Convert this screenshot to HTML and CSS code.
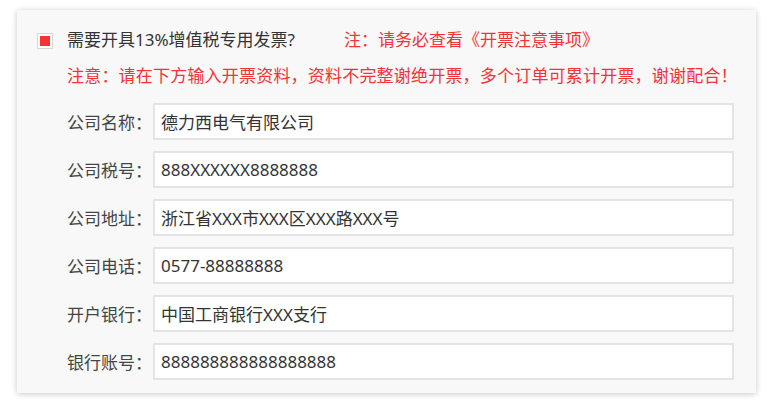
FILE: index.html
```html
<!DOCTYPE html>
<html lang="zh">
  <head>
    <meta charset="UTF-8" />
    <title>增值税专用发票</title>
    <meta name="viewport" content="width=device-width, initial-scale=1.0" />
    <link rel="stylesheet" href="styles.css">
  </head>
  <body>
    <div class="invoice-box">
      <div class="invoice-head">
        <span class="check-box"><span class="check-mark"></span></span>
        <span class="question">需要开具13%增值税专用发票?</span>
        <span class="red-text">注：请务必查看《开票注意事项》</span>
      </div>
      <p class="notice red-text">注意：请在下方输入开票资料，资料不完整谢绝开票，多个订单可累计开票，谢谢配合！</p>

      <form class="invoice-form">
        <div class="form-row">
          <label>公司名称：</label>
          <input type="text" value="德力西电气有限公司" />
        </div>
        <div class="form-row">
          <label>公司税号：</label>
          <input type="text" value="888XXXXXX8888888" />
        </div>
        <div class="form-row">
          <label>公司地址：</label>
          <input type="text" value="浙江省XXX市XXX区XXX路XXX号" />
        </div>
        <div class="form-row">
          <label>公司电话：</label>
          <input type="text" value="0577-88888888" />
        </div>
        <div class="form-row">
          <label>开户银行：</label>
          <input type="text" value="中国工商银行XXX支行" />
        </div>
        <div class="form-row">
          <label>银行账号：</label>
          <input type="text" value="888888888888888888" />
        </div>
      </form>
    </div>
  </body>
</html>
```

FILE: styles.css
```css
body {
  margin: 0;
  padding: 10px 17px;
  background: #fff;
  font-family: 'Noto Sans', 'Noto Sans CJK SC', sans-serif;
  font-size: 17px;
  color: #333;
}

.invoice-box {
  width: 739px;
  height: 383px;
  box-sizing: border-box;
  padding: 22px 22px 12px 20px;
  background: #f8f8f8;
  box-shadow: 0 1px 6px rgba(0, 0, 0, 0.22);
}

.invoice-head {
  display: flex;
  align-items: center;
  height: 16px;
  line-height: 24px;
}

.check-box {
  width: 14px;
  height: 14px;
  border: 1px solid #d6d6d6;
  background: #fff;
  display: flex;
  align-items: center;
  justify-content: center;
  margin-right: 14px;
  margin-top: 1px;
}

.check-mark {
  width: 10px;
  height: 10px;
  background: #f53236;
}

.question {
  width: 277px;
  color: #333;
}

.red-text {
  color: #f53236;
}

.notice {
  margin: 16px 0 0 30px;
  line-height: 24px;
  white-space: nowrap;
  letter-spacing: 0.2px;
}

.invoice-form {
  margin: 15px 0 0 30px;
  display: flex;
  flex-direction: column;
  gap: 11px;
}

.form-row {
  display: flex;
  align-items: center;
}

.form-row label {
  width: 86px;
  color: #444;
}

.form-row input {
  flex: 1;
  height: 37px;
  box-sizing: border-box;
  border: 2px solid #e4e4e4;
  background: #fff;
  padding: 0 6px;
  font-family: inherit;
  font-size: 17px;
  color: #333;
  outline: none;
}
```
